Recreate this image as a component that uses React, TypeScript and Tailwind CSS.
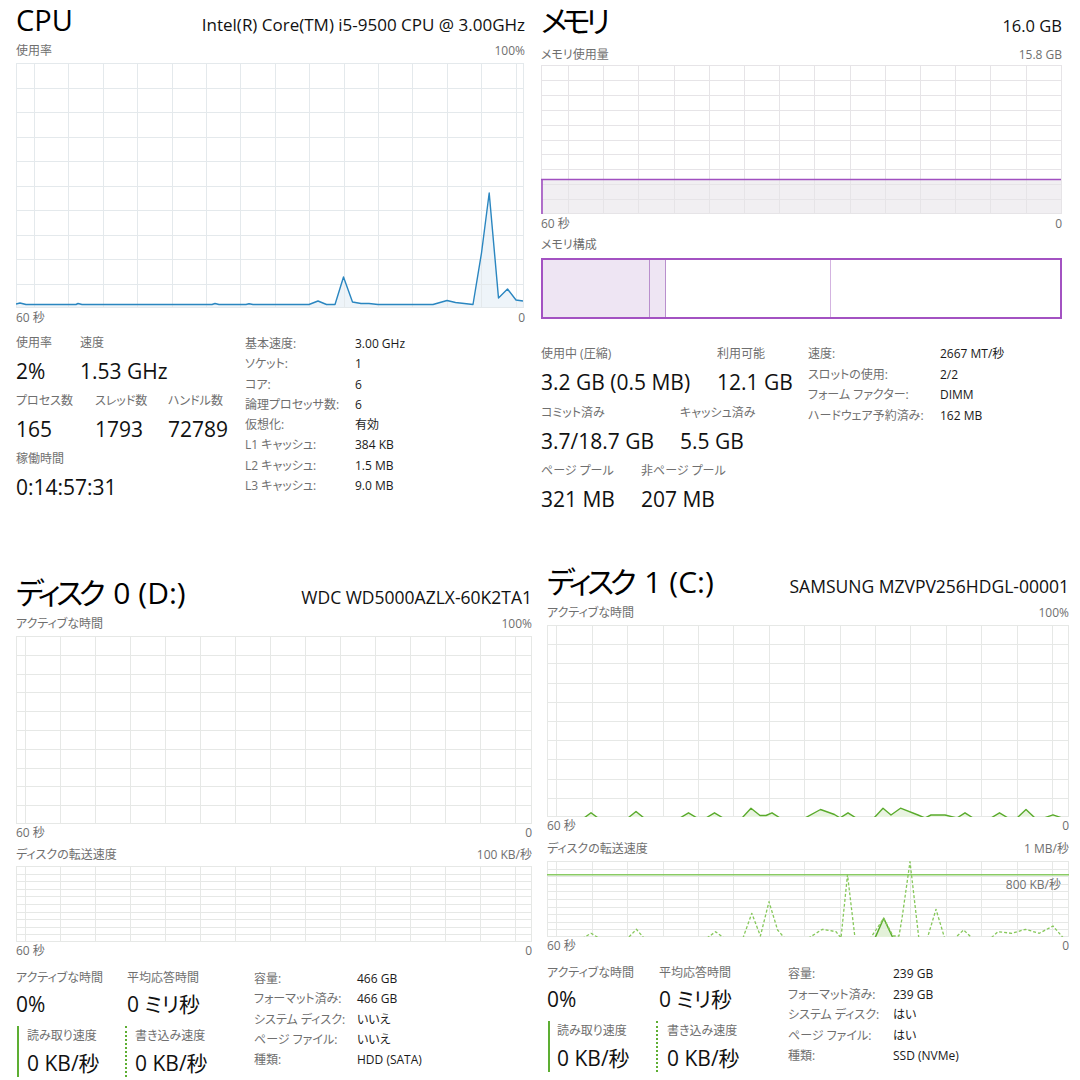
import React from "react";

type Pt = [number, number];

const pts = (p: Pt[]) => p.map(([x, y]) => `${x},${y}`).join(" ");

function Grid({
  w,
  h,
  rows,
  offset,
  spacing,
  color,
}: {
  w: number;
  h: number;
  rows: number;
  offset: number;
  spacing: number;
  color: string;
}) {
  const items: React.ReactNode[] = [];
  for (let i = 1; i < rows; i++) {
    const y = Math.round((h * i) / rows) + 0.5;
    items.push(<line key={"h" + i} x1={0} x2={w} y1={y} y2={y} stroke={color} strokeWidth={1} />);
  }
  let k = 0;
  for (let x = offset; x < w - 2; x += spacing) {
    const xx = Math.round(x) + 0.5;
    items.push(<line key={"v" + k++} x1={xx} x2={xx} y1={0} y2={h} stroke={color} strokeWidth={1} />);
  }
  items.push(
    <rect key="b" x={0.5} y={0.5} width={w - 1} height={h - 1} fill="none" stroke={color} strokeWidth={1} />
  );
  return <g>{items}</g>;
}

function Stat({ label, value, cls }: { label: string; value: string; cls?: string }) {
  return (
    <div className={cls}>
      <div className="h-[20px] leading-[20px] text-[12px] text-[#6f6f6f] whitespace-nowrap">{label}</div>
      <div className="h-[36px] leading-[36px] text-[21px] text-[#111] whitespace-nowrap">{value}</div>
    </div>
  );
}

function InfoTable({
  rows,
  rowCls,
  labelCls,
}: {
  rows: [string, string][];
  rowCls: string;
  labelCls: string;
}) {
  return (
    <div className="flex flex-col text-[12px]">
      {rows.map(([l, v]) => (
        <div key={l} className={"flex whitespace-nowrap " + rowCls}>
          <span className={"text-[#6f6f6f] " + labelCls}>{l}</span>
          <span className="text-[#1a1a1a]">{v}</span>
        </div>
      ))}
    </div>
  );
}

/* ---------------- CPU ---------------- */
const cpuPts: Pt[] = [
  [0, 241], [4, 240], [10, 241.5], [60, 241.5], [62, 240.5], [66, 241.5], [196, 241.5], [199, 240.5],
  [203, 241.5], [230, 241.5], [233, 240.7], [237, 241.5], [293, 241.5], [302, 238], [310.5, 241.5],
  [319, 241.5], [327.5, 214], [336.5, 239], [345, 240.5], [353, 240.5], [362, 241.5], [417, 241.5],
  [431, 237.5], [439.5, 239.5], [457, 241.5], [465.5, 190], [473.2, 130], [482.5, 235], [491.5, 226],
  [500, 237], [507, 238],
];

function CpuPanel() {
  const W = 508;
  const H = 245;
  return (
    <div className="pl-[16px]">
      <div className="w-[509px]">
        <div className="flex justify-between items-baseline h-[39px]">
          <span className="text-[29px] leading-[39px] text-black">CPU</span>
          <span className="text-[17px] leading-[20px] text-[#111]">Intel(R) Core(TM) i5-9500 CPU @ 3.00GHz</span>
        </div>
        <div className="flex justify-between h-[24px] leading-[24px] text-[12px] text-[#6f6f6f]">
          <span>使用率</span>
          <span>100%</span>
        </div>
        <svg width={W} height={H} className="block">
          <polygon points={pts([...cpuPts, [507, 244], [0, 244]])} fill="#eef4f9" />
          <Grid w={W} h={H} rows={10} offset={18} spacing={34.4} color="#e4e9ec" />
          <polyline points={pts(cpuPts)} fill="none" stroke="#2a86c0" strokeWidth={1.4} strokeLinejoin="round" />
        </svg>
        <div className="flex justify-between h-[20px] leading-[20px] text-[12px] text-[#6f6f6f]">
          <span>60 秒</span>
          <span>0</span>
        </div>
        <div className="flex mt-[5px]">
          <div className="w-[229px]">
            <div className="flex mb-[2px]">
              <Stat label="使用率" value="2%" cls="w-[64px]" />
              <Stat label="速度" value="1.53 GHz" />
            </div>
            <div className="flex mb-[2px]">
              <Stat label="プロセス数" value="165" cls="w-[79px]" />
              <Stat label="スレッド数" value="1793" cls="w-[73px]" />
              <Stat label="ハンドル数" value="72789" />
            </div>
            <Stat label="稼働時間" value="0:14:57:31" />
          </div>
          <div className="mt-[1px]">
            <InfoTable
              rowCls="h-[20.3px] leading-[20.3px]"
              labelCls="w-[110px]"
              rows={[
                ["基本速度:", "3.00 GHz"],
                ["ソケット:", "1"],
                ["コア:", "6"],
                ["論理プロセッサ数:", "6"],
                ["仮想化:", "有効"],
                ["L1 キャッシュ:", "384 KB"],
                ["L2 キャッシュ:", "1.5 MB"],
                ["L3 キャッシュ:", "9.0 MB"],
              ]}
            />
          </div>
        </div>
      </div>
    </div>
  );
}

/* ---------------- Memory ---------------- */
function MemoryPanel() {
  const W = 521;
  const H = 149;
  return (
    <div className="pl-[1px]">
      <div className="w-[521px]">
        <div className="flex justify-between items-baseline h-[41px]">
          <span className="text-[30px] leading-[41px] text-black">
            <span className="tracking-[-5px]">メモ</span>リ
          </span>
          <span className="text-[16.5px] leading-[20px] text-[#111]">16.0 GB</span>
        </div>
        <div className="flex justify-between h-[24px] leading-[27px] text-[12px] text-[#6f6f6f]">
          <span>メモリ使用量</span>
          <span>15.8 GB</span>
        </div>
        <svg width={W} height={H} className="block">
          <rect x={0} y={114} width={W} height={H - 114} fill="#f1eff2" />
          <Grid w={W} h={H} rows={10} offset={27} spacing={35.2} color="#e6e4e7" />
          <line x1={0} x2={W - 1} y1={114.5} y2={114.5} stroke="#a04fc0" strokeWidth={1.6} />
          <line x1={1} x2={1} y1={114} y2={H} stroke="#a04fc0" strokeWidth={1.6} />
        </svg>
        <div className="flex justify-between h-[18px] leading-[20px] text-[12px] text-[#6f6f6f]">
          <span>60 秒</span>
          <span>0</span>
        </div>
        <div className="mt-[3px] h-[20px] leading-[20px] text-[12px] text-[#6f6f6f]">メモリ構成</div>
        <div className="mt-[3px] h-[61px] flex border-2 border-[#a352c2]">
          <div className="w-[107px] bg-[#eee5f3] border-r border-[#b98fcd]" />
          <div className="w-[16px] bg-[#eee5f3] border-r border-[#b98fcd]" />
          <div className="w-[165px] border-r border-[#d3b3e0]" />
          <div className="flex-1" />
        </div>
        <div className="flex mt-[25px]">
          <div className="w-[267px]">
            <div className="flex mb-[2.5px]">
              <Stat label="使用中 (圧縮)" value="3.2 GB (0.5 MB)" cls="w-[176px]" />
              <Stat label="利用可能" value="12.1 GB" />
            </div>
            <div className="flex mb-[2.5px]">
              <Stat label="コミット済み" value="3.7/18.7 GB" cls="w-[139px]" />
              <Stat label="キャッシュ済み" value="5.5 GB" />
            </div>
            <div className="flex">
              <Stat label="ページ プール" value="321 MB" cls="w-[100px]" />
              <Stat label="非ページ プール" value="207 MB" />
            </div>
          </div>
          <div>
            <InfoTable
              rowCls="h-[20.6px] leading-[20.6px]"
              labelCls="w-[132px]"
              rows={[
                ["速度:", "2667 MT/秒"],
                ["スロットの使用:", "2/2"],
                ["フォーム ファクター:", "DIMM"],
                ["ハードウェア予約済み:", "162 MB"],
              ]}
            />
          </div>
        </div>
      </div>
    </div>
  );
}

/* ---------------- Disks ---------------- */
type DiskProps = {
  wrapCls: string;
  innerCls: string;
  title: React.ReactNode;
  model: string;
  W: number;
  H1: number;
  offset: number;
  spacing: number;
  chart1Cls: string;
  chart1: React.ReactNode;
  xferCls: string;
  xferMax: string;
  chart2Cls: string;
  chart2: React.ReactNode;
  overlay?: React.ReactNode;
  leftCls: string;
  col1Cls: string;
  readCls: string;
  writeCls: string;
  tableRowCls: string;
  tableLabelCls: string;
  info: [string, string][];
};

function DiskPanel(p: DiskProps) {
  const H2 = 76;
  return (
    <div className={p.wrapCls}>
      <div className={p.innerCls}>
        <div className="flex justify-between items-baseline h-[41px]">
          <span className="text-[30px] leading-[41px] text-black whitespace-nowrap">{p.title}</span>
          <span className="text-[17.5px] leading-[20px] text-[#111] whitespace-nowrap">{p.model}</span>
        </div>
        <div className="flex justify-between h-[22px] leading-[22px] text-[12px] text-[#6f6f6f]">
          <span>アクティブな時間</span>
          <span>100%</span>
        </div>
        <div className={p.chart1Cls}>
          <svg width={p.W} height={p.H1} className="block">
            <Grid w={p.W} h={p.H1} rows={10} offset={p.offset} spacing={p.spacing} color="#e6e8e6" />
            {p.chart1}
          </svg>
        </div>
        <div className="flex justify-between h-[18px] leading-[18px] text-[12px] text-[#6f6f6f]">
          <span>60 秒</span>
          <span>0</span>
        </div>
        <div className={"flex justify-between h-[22px] leading-[22px] text-[12px] text-[#6f6f6f] " + p.xferCls}>
          <span>ディスクの転送速度</span>
          <span>{p.xferMax}</span>
        </div>
        <div className={"relative " + p.chart2Cls}>
          <svg width={p.W} height={H2} className="block">
            <Grid w={p.W} h={H2} rows={10} offset={p.offset} spacing={p.spacing} color="#e6e8e6" />
            {p.chart2}
          </svg>
          {p.overlay}
        </div>
        <div className="flex justify-between h-[18px] leading-[18px] text-[12px] text-[#6f6f6f]">
          <span>60 秒</span>
          <span>0</span>
        </div>
        <div className="flex mt-[8px]">
          <div className={p.leftCls}>
            <div className="flex">
              <div className={p.col1Cls}>
                <div className="h-[20px] leading-[20px] text-[12px] text-[#6f6f6f] whitespace-nowrap">アクティブな時間</div>
                <div className="h-[32px] leading-[32px] text-[21px] text-[#111]">0%</div>
              </div>
              <div>
                <div className="h-[20px] leading-[20px] text-[12px] text-[#6f6f6f] whitespace-nowrap">平均応答時間</div>
                <div className="h-[32px] leading-[32px] text-[21px] text-[#111] whitespace-nowrap">0 ミリ秒</div>
              </div>
            </div>
            <div className="flex mt-[6px]">
              <div className={p.readCls}>
                <div className="h-[20px] leading-[20px] text-[12px] text-[#6f6f6f] whitespace-nowrap">読み取り速度</div>
                <div className="h-[31px] leading-[34px] text-[21px] text-[#111] whitespace-nowrap">0 KB/秒</div>
              </div>
              <div className={p.writeCls}>
                <div className="h-[20px] leading-[20px] text-[12px] text-[#6f6f6f] whitespace-nowrap">書き込み速度</div>
                <div className="h-[31px] leading-[34px] text-[21px] text-[#111] whitespace-nowrap">0 KB/秒</div>
              </div>
            </div>
          </div>
          <div className="mt-[1px]">
            <InfoTable rowCls={p.tableRowCls} labelCls={p.tableLabelCls} rows={p.info} />
          </div>
        </div>
      </div>
    </div>
  );
}

const d1a: Pt[] = [
  [0, 0], [37, 0], [44, 3.7], [51, 0], [81, 0], [89, 5], [97, 0], [133, 0], [141.5, 3.7], [150, 0],
  [159, 0], [167.5, 3.7], [176, 0], [195, 0], [204, 8.3], [213, 1], [219, 1], [225, 3.7], [233, 0],
  [258, 0], [273.5, 7], [287.5, 2], [293, 0], [301, 3.7], [309, 0], [327, 0], [336, 8.3], [344, 1.5],
  [353.5, 8.3], [371, 1.5], [378, 0], [384, 1.5], [398, 1.5], [410, 0], [418, 3.7], [426, 0], [444, 0],
  [452.5, 3.7], [461, 0], [470, 0], [479, 7], [488, 0], [497, 0], [506, 1.7], [515, 0], [522, 0],
];

const d1Write: Pt[] = [
  [0, 77], [36, 77], [44, 72.3], [52, 77], [81, 77], [89.4, 68.3], [97, 77], [160, 77], [168.6, 70.7],
  [177, 77], [196, 77], [204.8, 52.3], [213.4, 75], [222, 40.7], [230.6, 69], [237.5, 77], [261.6, 77],
  [275.4, 68.3], [289, 70.7], [294, 77], [300.5, 13.7], [308, 77], [323.6, 77], [336.7, 57.3], [346, 75],
  [352, 75], [355, 57.3], [363, 0.7], [371.8, 77], [380.4, 77], [389, 48.3], [397.6, 77], [408, 77],
  [416.6, 69], [425, 77], [444, 77], [451, 70.7], [464.8, 72.3], [478.5, 68.3], [492.3, 72.3], [506, 65],
  [516.4, 77], [521, 77],
];

const d1Read: Pt[] = [
  [0, 77], [328, 77], [336.7, 57.3], [346, 77], [521, 77],
];

function Disk0() {
  return (
    <DiskPanel
      wrapCls="pl-[16px] pt-[12px]"
      innerCls="w-[516px]"
      title={
        <>
          <span className="tracking-[-4.5px]">ディス</span>ク 0 (D:)
        </>
      }
      model="WDC WD5000AZLX-60K2TA1"
      W={516}
      H1={188}
      offset={9.4}
      spacing={35}
      chart1Cls="mt-[1px]"
      chart1={null}
      xferCls="mt-[2px]"
      xferMax="100 KB/秒"
      chart2Cls=""
      chart2={null}
      leftCls="w-[238px]"
      col1Cls="w-[111px]"
      readCls="ml-[1px] w-[108px] pl-[8px] border-l-2 border-[#5dae33]"
      writeCls="pl-[8px] border-l-2 border-dotted border-[#5dae33]"
      tableRowCls="h-[20.3px] leading-[20.3px]"
      tableLabelCls="w-[103px]"
      info={[
        ["容量:", "466 GB"],
        ["フォーマット済み:", "466 GB"],
        ["システム ディスク:", "いいえ"],
        ["ページ ファイル:", "いいえ"],
        ["種類:", "HDD (SATA)"],
      ]}
    />
  );
}

function Disk1() {
  const W = 522;
  const H1 = 192;
  const a = d1a.map(([x, h]) => [x, h === 0 ? H1 + 1 : H1 - 0.5 - h] as Pt);
  return (
    <DiskPanel
      wrapCls="pl-[7px] pt-[1px]"
      innerCls="w-[522px]"
      title={
        <>
          <span className="tracking-[-4.5px]">ディス</span>ク 1 (C:)
        </>
      }
      model="SAMSUNG MZVPV256HDGL-00001"
      W={W}
      H1={H1}
      offset={9.4}
      spacing={35.4}
      chart1Cls="mt-[1px]"
      chart1={
        <g>
          <polygon points={pts([...a, [W, H1], [0, H1]])} fill="#e9f4e1" />
          <polyline points={pts(a)} fill="none" stroke="#5aab2c" strokeWidth={1.4} strokeLinejoin="round" />
        </g>
      }
      xferCls="mt-[3px]"
      xferMax="1 MB/秒"
      chart2Cls="mt-[1px]"
      chart2={
        <g>
          <polygon points={pts([...d1Read, [521, 76], [0, 76]])} fill="#e3f1d9" />
          <line x1={0} x2={W} y1={13.7} y2={13.7} stroke="#8acb64" strokeWidth={1.4} />
          <polyline points={pts(d1Read)} fill="none" stroke="#5aab2c" strokeWidth={1.5} strokeLinejoin="round" />
          <polyline
            points={pts(d1Write)}
            fill="none"
            stroke="#86c85a"
            strokeWidth={1.3}
            strokeDasharray="3 2"
            strokeLinejoin="round"
          />
        </g>
      }
      overlay={
        <span className="absolute right-[8px] top-[15px] h-[18px] leading-[18px] text-[12px] text-[#6f6f6f]">
          800 KB/秒
        </span>
      }
      leftCls="w-[241px]"
      col1Cls="w-[112px]"
      readCls="ml-[1px] w-[108px] pl-[7px] border-l-2 border-[#5dae33]"
      writeCls="pl-[9px] border-l-2 border-dotted border-[#5dae33]"
      tableRowCls="h-[20.5px] leading-[20.5px]"
      tableLabelCls="w-[105px]"
      info={[
        ["容量:", "239 GB"],
        ["フォーマット済み:", "239 GB"],
        ["システム ディスク:", "はい"],
        ["ページ ファイル:", "はい"],
        ["種類:", "SSD (NVMe)"],
      ]}
    />
  );
}

export default function App() {
  return (
    <div className="w-[1080px] h-[1080px] bg-white overflow-hidden grid grid-cols-[540px_540px] grid-rows-[560px_520px] font-['Open_Sans','Noto_Sans_CJK_JP',sans-serif] [font-feature-settings:'palt'] text-black">
      <CpuPanel />
      <MemoryPanel />
      <Disk0 />
      <Disk1 />
    </div>
  );
}
